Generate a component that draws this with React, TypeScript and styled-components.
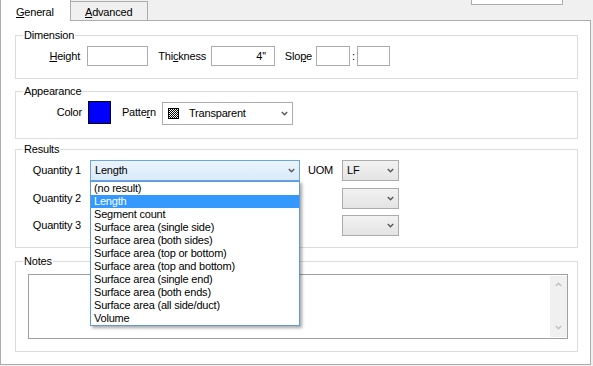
import React from 'react';
import styled, { createGlobalStyle } from 'styled-components';

const Global = createGlobalStyle`
  html, body { margin: 0; padding: 0; background: #f0f0f0; }
  body { font-family: "Liberation Sans", Arial, sans-serif; font-size: 11px; color: #000; }
`;

const Window = styled.div`
  width: 593px;
  height: 366px;
  overflow: hidden;
  background: #f0f0f0;
  font-family: "Liberation Sans", Arial, sans-serif;
  font-size: 11px;
  letter-spacing: -0.2px;
  line-height: 13px;
  color: #000;
  display: flex;
  flex-direction: column;
`;

const TopBar = styled.div`
  position: relative;
  z-index: 1;
  height: 20px;
  flex-shrink: 0;
  display: flex;
  align-items: flex-start;
`;

const Tab = styled.div<{ $active?: boolean; $w: number; $pl: number }>`
  box-sizing: border-box;
  width: ${(p) => p.$w}px;
  height: ${(p) => (p.$active ? 22 : 19)}px;
  margin-top: ${(p) => (p.$active ? -1 : 1)}px;
  margin-left: ${(p) => (p.$active ? 0 : -1)}px;
  position: relative;
  z-index: ${(p) => (p.$active ? 2 : 1)};
  background: ${(p) => (p.$active ? '#fff' : '#f0f0f0')};
  border: 1px solid #acacac;
  border-bottom: none;
  padding: ${(p) => (p.$active ? 6 : 4)}px 0 0 ${(p) => p.$pl}px;
  white-space: nowrap;
`;

const AK = styled.u`
  text-decoration: underline;
  text-underline-offset: 1px;
`;

const HiddenField = styled.div`
  margin-left: auto;
  margin-right: 30px;
  margin-top: -16px;
  display: flex;
  align-items: center;
`;

const HiddenLabel = styled.span`
  width: 77px;
  line-height: 21px;
  white-space: nowrap;
`;

const HiddenInput = styled.div`
  box-sizing: border-box;
  width: 92px;
  height: 21px;
  border: 1px solid #acacac;
  background: #fff;
`;

const Page = styled.div`
  box-sizing: border-box;
  width: 591px;
  height: 345px;
  background: #fff;
  border: 1px solid #acacac;
  padding: 8px 12px 0 14px;
  display: flex;
  flex-direction: column;
`;

const Group = styled.fieldset<{ $h: number; $mt?: number }>`
  box-sizing: border-box;
  height: ${(p) => p.$h}px;
  margin: ${(p) => p.$mt ?? 0}px 0 0 0;
  padding: 0;
  min-width: 0;
  border: 1px solid #dcdcdc;
  flex-shrink: 0;
`;

const Legend = styled.legend`
  padding: 0 1px;
  margin-left: 7px;
  line-height: 13px;
  font-size: 11px;
`;

const Row = styled.div<{ $pt: number; $h: number }>`
  display: flex;
  align-items: flex-start;
  margin-top: ${(p) => p.$pt}px;
  height: ${(p) => p.$h}px;
`;

const FieldLabel = styled.label<{ $w: number; $pr: number; $lh: number }>`
  box-sizing: border-box;
  flex-shrink: 0;
  width: ${(p) => p.$w}px;
  padding-right: ${(p) => p.$pr}px;
  text-align: right;
  line-height: ${(p) => p.$lh}px;
  white-space: nowrap;
`;

const TextInput = styled.input<{ $w: number }>`
  box-sizing: border-box;
  flex-shrink: 0;
  width: ${(p) => p.$w}px;
  height: 20px;
  margin: 0;
  border: 1px solid #acacac;
  background: #fff;
  padding: 0 8px 0 2px;
  font: inherit;
  letter-spacing: inherit;
  text-align: right;
  outline: none;
  color: #000;
`;

const Colon = styled.span`
  width: 7px;
  flex-shrink: 0;
  text-align: center;
  line-height: 20px;
`;

const ColorSwatch = styled.div<{ $color: string }>`
  box-sizing: border-box;
  width: 23px;
  height: 23px;
  flex-shrink: 0;
  border: 1px solid #000;
  background: ${(p) => p.$color};
`;

type SelectVariant = 'focus' | 'plain' | 'white';

const SelectBox = styled.div<{ $w: number; $h: number; $mt?: number; $variant: SelectVariant }>`
  position: relative;
  box-sizing: border-box;
  flex-shrink: 0;
  width: ${(p) => p.$w}px;
  height: ${(p) => p.$h}px;
  margin-top: ${(p) => p.$mt ?? 0}px;
  display: flex;
  align-items: center;
  padding: 0 4px 0 4px;
  border: 1px solid ${(p) => (p.$variant === 'focus' ? '#69a5e5' : '#acacac')};
  background: ${(p) =>
    p.$variant === 'focus'
      ? 'linear-gradient(#ecf4fc, #d9eafa)'
      : p.$variant === 'plain'
      ? 'linear-gradient(#f2f2f2, #e4e4e4)'
      : '#fff'};
  white-space: nowrap;
`;

const SelectText = styled.span`
  flex: 1;
  overflow: hidden;
`;

const PatternIcon = styled.span`
  box-sizing: border-box;
  width: 11px;
  height: 11px;
  flex-shrink: 0;
  margin: 0 10px 0 1px;
  border: 1px solid #000;
  background: repeating-conic-gradient(#000 0 25%, #fff 0 50%) 0 0 / 2px 2px;
`;

const ChevronSvg = styled.svg`
  display: block;
  flex-shrink: 0;
`;

const Chevron = ({ color = '#5a5a5a', up = false }: { color?: string; up?: boolean }) => (
  <ChevronSvg width="7" height="5" viewBox="0 0 7 5">
    <polyline
      points={up ? '0.8,4 3.5,1.3 6.2,4' : '0.8,1 3.5,3.7 6.2,1'}
      fill="none"
      stroke={color}
      strokeWidth="1.5"
    />
  </ChevronSvg>
);

const ListBox = styled.ul`
  position: absolute;
  z-index: 10;
  top: calc(100% + 1px);
  left: -1px;
  box-sizing: border-box;
  width: 210px;
  margin: 0;
  padding: 0;
  list-style: none;
  border: 1px solid #5f9bdc;
  background: #fff;
  box-shadow: 2px 2px 3px rgba(0, 0, 0, 0.35);
`;

const ListItem = styled.li<{ $selected?: boolean }>`
  height: 13px;
  line-height: 13px;
  padding-left: 3px;
  background: ${(p) => (p.$selected ? '#3399ff' : 'transparent')};
  color: ${(p) => (p.$selected ? '#fff' : '#000')};
  white-space: nowrap;
`;

const NotesBox = styled.div`
  box-sizing: border-box;
  height: 65px;
  margin: 6px 9px 0 12px;
  border: 1px solid #a0a0a0;
  background: #fff;
  padding: 1px 0;
  display: flex;
  justify-content: flex-end;
`;

const ScrollTrack = styled.div`
  width: 17px;
  background: #f0f0f0;
  display: flex;
  flex-direction: column;
  justify-content: space-between;
  align-items: center;
  padding: 6px 0 7px;
  box-sizing: border-box;
`;

const options = [
  '(no result)',
  'Length',
  'Segment count',
  'Surface area (single side)',
  'Surface area (both sides)',
  'Surface area (top or bottom)',
  'Surface area (top and bottom)',
  'Surface area (single end)',
  'Surface area (both ends)',
  'Surface area (all side/duct)',
  'Volume',
];

export default function App() {
  return (
    <>
      <Global />
      <Window>
        <TopBar>
          <Tab $active $w={71} $pl={15}>
            <AK>G</AK>eneral
          </Tab>
          <Tab $w={78} $pl={14}>
            <AK>A</AK>dvanced
          </Tab>
          <HiddenField>
            <HiddenLabel>
              Nam<AK>e</AK>
            </HiddenLabel>
            <HiddenInput />
          </HiddenField>
        </TopBar>
        <Page>
          <Group $h={50}>
            <Legend>Dimension</Legend>
            <Row $pt={4} $h={20}>
              <FieldLabel $w={71} $pr={7} $lh={20}>
                <AK>H</AK>eight
              </FieldLabel>
              <TextInput $w={61} readOnly value="" />
              <FieldLabel $w={63} $pr={5} $lh={20}>
                Thi<AK>c</AK>kness
              </FieldLabel>
              <TextInput $w={64} readOnly value="4''" />
              <FieldLabel $w={41} $pr={4} $lh={20}>
                Slo<AK>p</AK>e
              </FieldLabel>
              <TextInput $w={34} readOnly value="" />
              <Colon>:</Colon>
              <TextInput $w={33} readOnly value="" />
            </Row>
          </Group>

          <Group $h={54} $mt={6}>
            <Legend>Appearance</Legend>
            <Row $pt={3} $h={24}>
              <FieldLabel $w={72} $pr={6} $lh={23}>
                Color
              </FieldLabel>
              <ColorSwatch $color="#0000ff" />
              <FieldLabel $w={51} $pr={6} $lh={23}>
                Patte<AK>r</AK>n
              </FieldLabel>
              <SelectBox $w={131} $h={23} $mt={1} $variant="white">
                <PatternIcon />
                <SelectText>Transparent</SelectText>
                <Chevron />
              </SelectBox>
            </Row>
          </Group>

          <Group $h={105} $mt={4}>
            <Legend>Results</Legend>
            <Row $pt={4} $h={21}>
              <FieldLabel $w={74} $pr={9} $lh={21}>
                Quantity 1
              </FieldLabel>
              <SelectBox $w={210} $h={21} $variant="focus">
                <SelectText>Length</SelectText>
                <Chevron />
                <ListBox>
                  {options.map((o) => (
                    <ListItem key={o} $selected={o === 'Length'}>
                      {o}
                    </ListItem>
                  ))}
                </ListBox>
              </SelectBox>
              <FieldLabel $w={42} $pr={9} $lh={21}>
                UOM
              </FieldLabel>
              <SelectBox $w={57} $h={21} $variant="plain">
                <SelectText>LF</SelectText>
                <Chevron />
              </SelectBox>
            </Row>
            <Row $pt={7} $h={21}>
              <FieldLabel $w={74} $pr={9} $lh={21}>
                Quantity 2
              </FieldLabel>
              <SelectBox $w={210} $h={21} $variant="plain">
                <SelectText />
                <Chevron />
              </SelectBox>
              <FieldLabel $w={42} $pr={9} $lh={21} />
              <SelectBox $w={57} $h={21} $variant="plain">
                <SelectText />
                <Chevron />
              </SelectBox>
            </Row>
            <Row $pt={6} $h={21}>
              <FieldLabel $w={74} $pr={9} $lh={21}>
                Quantity 3
              </FieldLabel>
              <SelectBox $w={210} $h={21} $variant="plain">
                <SelectText />
                <Chevron />
              </SelectBox>
              <FieldLabel $w={42} $pr={9} $lh={21} />
              <SelectBox $w={57} $h={21} $variant="plain">
                <SelectText />
                <Chevron />
              </SelectBox>
            </Row>
          </Group>

          <Group $h={97} $mt={7}>
            <Legend>Notes</Legend>
            <NotesBox>
              <ScrollTrack>
                <Chevron color="#c2c2c2" up />
                <Chevron color="#c2c2c2" />
              </ScrollTrack>
            </NotesBox>
          </Group>
        </Page>
      </Window>
    </>
  );
}
